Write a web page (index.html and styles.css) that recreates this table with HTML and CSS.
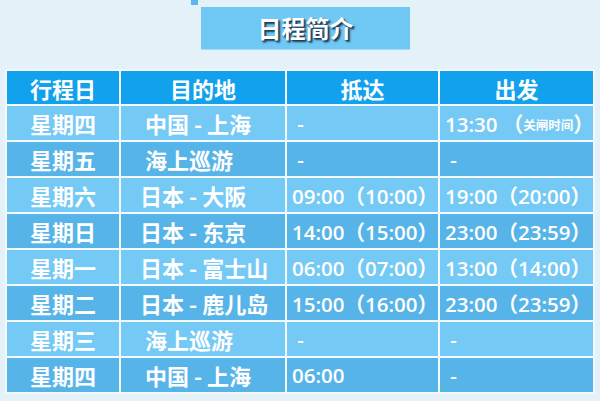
FILE: index.html
```html
<!DOCTYPE html>
<html lang="zh">
<head>
<meta charset="utf-8">
<link rel="stylesheet" href="styles.css">
</head>
<body>
<div class="page">
  <div class="marker"></div>
  <div class="title-wrap"><div class="title">日程简介</div></div>
  <div class="table">
    <div class="cell head">行程日</div>
    <div class="cell head">目的地</div>
    <div class="cell head">抵达</div>
    <div class="cell head">出发</div>

    <div class="cell day l">星期四</div>
    <div class="cell dest l">&nbsp;中国 - 上海</div>
    <div class="cell time l">&nbsp;-</div>
    <div class="cell time l">13:30 （<span class="small">关闸时间</span>）</div>

    <div class="cell day d">星期五</div>
    <div class="cell dest d">&nbsp;海上巡游</div>
    <div class="cell time d">&nbsp;-</div>
    <div class="cell time d">&nbsp;-</div>

    <div class="cell day l">星期六</div>
    <div class="cell dest l">日本 - 大阪</div>
    <div class="cell time l">09:00（10:00）</div>
    <div class="cell time l">19:00（20:00）</div>

    <div class="cell day d">星期日</div>
    <div class="cell dest d">日本 - 东京</div>
    <div class="cell time d">14:00（15:00）</div>
    <div class="cell time d">23:00（23:59）</div>

    <div class="cell day l">星期一</div>
    <div class="cell dest l">日本 - 富士山</div>
    <div class="cell time l">06:00（07:00）</div>
    <div class="cell time l">13:00（14:00）</div>

    <div class="cell day d">星期二</div>
    <div class="cell dest d">日本 - 鹿儿岛</div>
    <div class="cell time d">15:00（16:00）</div>
    <div class="cell time d">23:00（23:59）</div>

    <div class="cell day l">星期三</div>
    <div class="cell dest l">&nbsp;海上巡游</div>
    <div class="cell time l">&nbsp;-</div>
    <div class="cell time l">&nbsp;-</div>

    <div class="cell day d">星期四</div>
    <div class="cell dest d">&nbsp;中国 - 上海</div>
    <div class="cell time d">06:00</div>
    <div class="cell time d">&nbsp;-</div>
  </div>
</div>
</body>
</html>
```

FILE: styles.css
```css
html, body {
  margin: 0;
  padding: 0;
  background: #e4f1f9;
}
.page {
  width: 600px;
  height: 401px;
  overflow: hidden;
  position: relative;
  font-family: "Noto Sans CJK SC", sans-serif;
}
.marker {
  position: absolute;
  left: 191px;
  top: 0;
  width: 7px;
  height: 5px;
  background: #5eb4ec;
}
.title-wrap {
  padding-top: 7px;
  padding-left: 201px;
  height: 43px;
}
.title {
  width: 209px;
  height: 43px;
  background: #70c8f5;
  border-bottom: 1px solid #a6dcf7;
  box-sizing: border-box;
  color: #fff;
  font-weight: 700;
  font-size: 24px;
  line-height: 42px;
  text-align: center;
  text-shadow: 2px 2px 2px #1d3c58, 1px 1px 1px #2a4a66;
}
.table {
  margin: 19px 0 0 5px;
  width: 590px;
  padding: 2px;
  box-sizing: border-box;
  background: #f3f9fd;
  display: grid;
  grid-template-columns: 112px 164px 151px 153px;
  grid-template-rows: 33px repeat(8, 34px);
  gap: 2px;
}
.cell {
  color: #fff;
  display: flex;
  align-items: center;
  white-space: pre;
  overflow: hidden;
}
.head {
  background: #12a1ec;
  justify-content: center;
  font-weight: 700;
  font-size: 22px;
}
.l { background: #74c9f5; }
.d { background: #57b4e8; }
.day {
  justify-content: center;
  font-weight: 700;
  font-size: 22px;
}
.dest {
  padding-left: 19px;
  font-weight: 700;
  font-size: 22px;
}
.time {
  padding-left: 5px;
  font-family: "Open Sans", "Noto Sans CJK SC", sans-serif;
  font-weight: 600;
  font-size: 20.5px;
}
.small {
  font-family: "Noto Sans CJK SC", sans-serif;
  font-size: 12.5px;
  font-weight: 700;
  padding-top: 3px;
}
```
